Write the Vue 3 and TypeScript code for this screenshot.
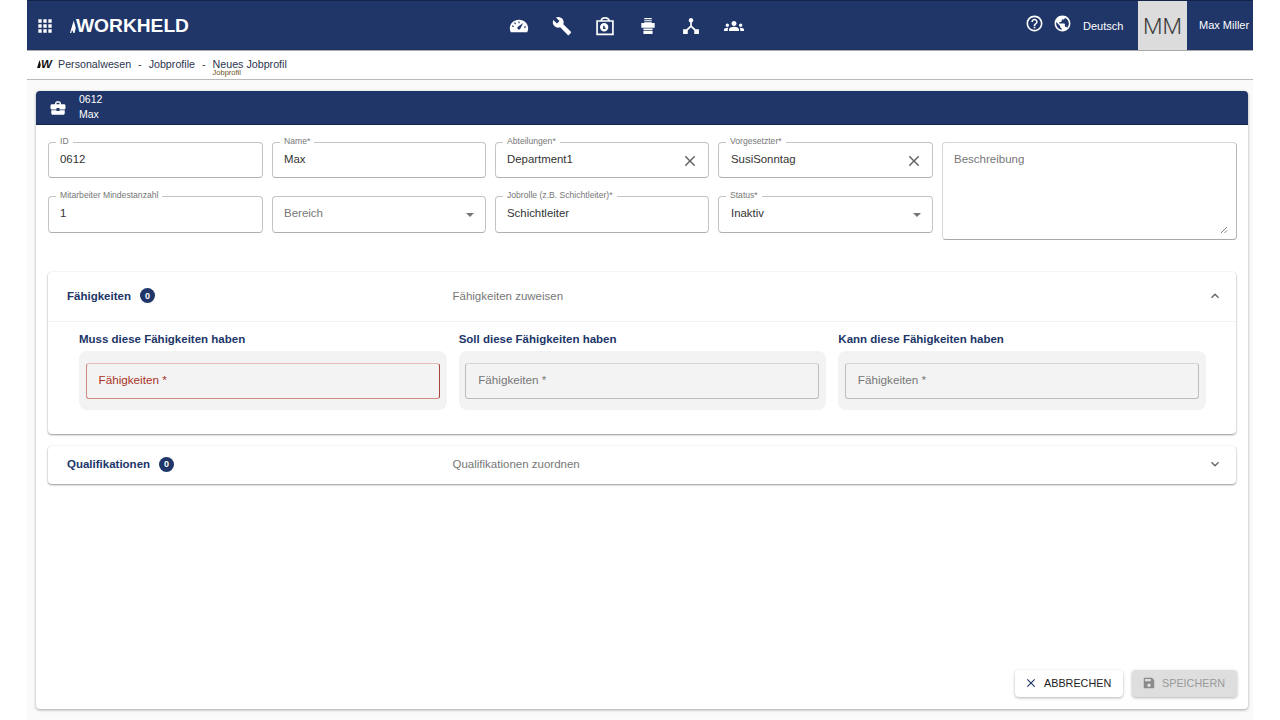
<script setup lang="ts">
interface Field {
  label: string
  value?: string
  placeholder?: string
  clear?: boolean
  arrow?: boolean
}
const fields: Field[] = [
  { label: 'ID', value: '0612' },
  { label: 'Name*', value: 'Max' },
  { label: 'Abteilungen*', value: 'Department1', clear: true },
  { label: 'Vorgesetzter*', value: 'SusiSonntag', clear: true },
  { label: 'Mitarbeiter Mindestanzahl', value: '1' },
  { label: '', placeholder: 'Bereich', arrow: true },
  { label: 'Jobrolle (z.B. Schichtleiter)*', value: 'Schichtleiter' },
  { label: 'Status*', value: 'Inaktiv', arrow: true },
]
const skills = [
  { title: 'Muss diese Fähigkeiten haben', error: true },
  { title: 'Soll diese Fähigkeiten haben', error: false },
  { title: 'Kann diese Fähigkeiten haben', error: false },
]
const closePath = 'M19 6.41L17.59 5 12 10.59 6.41 5 5 6.41 10.59 12 5 17.59 6.41 19 12 13.41 17.59 19 19 17.59 13.41 12z'
</script>

<template>
  <div class="app">
    <header class="topbar">
      <div class="top-left">
        <svg class="apps" viewBox="0 0 24 24"><path d="M4 8h4V4H4v4zm6 12h4v-4h-4v4zm-6 0h4v-4H4v4zm0-6h4v-4H4v4zm6 0h4v-4h-4v4zm6-10v4h4V4h-4zm-6 4h4V4h-4v4zm6 6h4v-4h-4v4zm0 6h4v-4h-4v4z" /></svg>
        <div class="logo">
          <svg class="logo-mark" viewBox="0 0 6 14"><path d="M0 14L3.700 1.500 5.800 9 4.500 14H3.300L2.700 11.800H1.800L1.300 14z" /></svg>
          <span>WORKHELD</span>
        </div>
      </div>
      <nav class="top-nav">
        <svg class="nav-ic" viewBox="0 0 24 24"><path fill-rule="evenodd" d="M12 4.500C5.600 4.500 1 9.300 1 14.800c0 1.800.5 3.500 1.200 4.700h19.600c.7-1.200 1.200-2.900 1.200-4.700C23 9.300 18.400 4.500 12 4.500zM17 8.500l-3.500 6.800a1.900 1.900 0 1 1-2.800-2.500zM11.300 6.500h1.400v2.200h-1.400zM6 8.400l1.100-.9 1.300 1.800-1.100.8zM3.500 12.500l.4-1.300 2.100.7-.4 1.300zM18 13l2.200-.7.4 1.300-2.200.7z" /></svg>
        <svg class="nav-ic" viewBox="0 0 24 24"><path d="M22.700 19l-9.100-9.100c.9-2.300.4-5-1.500-6.900-2-2-5-2.400-7.400-1.300L9 6 6 9 1.600 4.700C.4 7.100.9 10.100 2.900 12.100c1.900 1.900 4.600 2.400 6.900 1.500l9.100 9.100c.4.400 1 .4 1.400 0l2.300-2.300c.5-.4.500-1.100.1-1.400z" /></svg>
        <svg class="nav-ic" viewBox="0 0 24 24"><path fill-rule="evenodd" d="M1.500 5H6.500C7 2.500 9 1.300 12 1.300s5 1.200 6.100 3.700h4.400v18h-21zM3.500 7v14h17V7zM8.500 5h7.300c-.8-1.200-2.100-1.800-3.800-1.800S9.300 3.800 8.500 5zM11 8.500a5 5 0 1 1 0 10 5 5 0 0 1 0-10zm-1.300 3.200v3.800h3v-1.500h-1.200v-2.300z" /></svg>
        <svg class="nav-ic" viewBox="0 0 24 24"><path d="M7.500 2.500h9v1.300h-9zM7.500 5h9v1.300h-9zM7.500 7.500h9V8.500h3.500v5.500H4V8.500h3.500zM6.500 15h11v2h-11zM6.500 18h11v3.500h-11z" /></svg>
        <svg class="nav-ic" viewBox="0 0 24 24"><path d="M12 2.500a2.800 2.800 0 0 1 1 5.400v3.700l4.600 4.300h3.900v5.600h-5.600v-4.200L12 13.500l-3.900 3.800v4.200H2.500v-5.600h3.900L11 11.600V7.900a2.800 2.800 0 0 1 1-5.400z" /></svg>
        <svg class="nav-ic" viewBox="0 0 24 24"><path d="M12 12.750c1.630 0 3.070.39 4.240.9 1.080.48 1.760 1.560 1.760 2.730V18H6v-1.610c0-1.180.68-2.260 1.760-2.730 1.170-.52 2.610-.91 4.240-.91zM4 13c1.100 0 2-.9 2-2s-.9-2-2-2-2 .9-2 2 .9 2 2 2zm1.130 1.100c-.37-.06-.74-.1-1.130-.1-.99 0-1.930.21-2.780.58C.48 14.900 0 15.620 0 16.430V18h4.500v-1.610c0-.83.23-1.610.63-2.290zM20 13c1.100 0 2-.9 2-2s-.9-2-2-2-2 .9-2 2 .9 2 2 2zm4 3.430c0-.81-.48-1.530-1.220-1.850-.85-.37-1.790-.58-2.780-.58-.39 0-.76.04-1.130.1.4.68.63 1.460.63 2.290V18H24v-1.570zM12 6c1.660 0 3 1.340 3 3s-1.340 3-3 3-3-1.340-3-3 1.340-3 3-3z" /></svg>
      </nav>
      <div class="top-right">
        <svg class="right-ic" viewBox="0 0 24 24"><path d="M11 18h2v-2h-2v2zm1-16C6.480 2 2 6.480 2 12s4.480 10 10 10 10-4.480 10-10S17.520 2 12 2zm0 18c-4.410 0-8-3.590-8-8s3.590-8 8-8 8 3.590 8 8-3.590 8-8 8zm0-14c-2.210 0-4 1.790-4 4h2c0-1.100.9-2 2-2s2 .9 2 2c0 2-3 1.750-3 5h2c0-2.250 3-2.500 3-5 0-2.210-1.790-4-4-4z" /></svg>
        <svg class="right-ic globe" viewBox="0 0 24 24"><path d="M12 2C6.480 2 2 6.480 2 12s4.480 10 10 10 10-4.480 10-10S17.520 2 12 2zm-1 17.930c-3.950-.49-7-3.850-7-7.930 0-.62.08-1.210.21-1.790L9 15v1c0 1.100.9 2 2 2v1.930zm6.900-2.540c-.26-.81-1-1.390-1.900-1.390h-1v-3c0-.55-.45-1-1-1H8v-2h2c.55 0 1-.45 1-1V7h2c1.100 0 2-.9 2-2v-.41c2.930 1.190 5 4.060 5 7.410 0 2.080-.8 3.970-2.100 5.390z" /></svg>
        <span class="lang">Deutsch</span>
        <div class="avatar">MM</div>
        <span class="user">Max Miller</span>
      </div>
    </header>

    <div class="crumbs">
      <span class="crumb-logo"><svg class="crumb-mark" viewBox="0 0 6 14"><path d="M0 14L3.700 1.500 5.800 9 4.500 14H1.300z" /></svg>W</span>
      <span class="crumb">Personalwesen</span>
      <span class="sep">-</span>
      <span class="crumb">Jobprofile</span>
      <span class="sep">-</span>
      <span class="crumb last">Neues Jobprofil<small class="crumb-sub">Jobprofil</small></span>
    </div>

    <main class="card">
      <div class="card-head">
        <svg class="brief" viewBox="0 0 24 24"><path d="M10 16v-1H3.010L3 19c0 1.110.89 2 2 2h14c1.110 0 2-.89 2-2v-4h-7v1h-4zm10-9h-4.010V5l-2-2h-4l-2 2v2H4c-1.100 0-2 .9-2 2v3c0 1.110.89 2 2 2h6v-2h4v2h6c1.100 0 2-.9 2-2V9c0-1.100-.9-2-2-2zm-6 0h-4V5h4v2z" /></svg>
        <div class="head-text"><div>0612</div><div>Max</div></div>
      </div>

      <div class="card-body">
        <section class="form">
          <div class="grid">
            <div v-for="f in fields" :key="f.label + f.placeholder" class="field">
              <span v-if="f.label" class="flabel">{{ f.label }}</span>
              <span v-if="f.value" class="fvalue">{{ f.value }}</span>
              <span v-else class="fplace">{{ f.placeholder }}</span>
              <svg v-if="f.clear" class="clear" viewBox="0 0 24 24"><path :d="closePath" /></svg>
              <span v-if="f.arrow" class="caret"></span>
            </div>
          </div>
          <div class="area">
            <span class="fplace">Beschreibung</span>
            <svg class="grip" viewBox="0 0 8 8"><path d="M7 1L1 7M7 4.500L4.500 7" /></svg>
          </div>
        </section>

        <section class="panel">
          <div class="panel-head open">
            <div class="panel-title"><b>Fähigkeiten</b><span class="badge">0</span></div>
            <div class="panel-desc">Fähigkeiten zuweisen</div>
            <svg class="chev" viewBox="0 0 24 24"><path d="M12 8l-6 6 1.410 1.410L12 10.830l4.590 4.580L18 14z" /></svg>
          </div>
          <div class="panel-body">
            <div v-for="s in skills" :key="s.title" class="skill">
              <h4>{{ s.title }}</h4>
              <div class="skill-box">
                <div class="skill-input" :class="{ error: s.error }">Fähigkeiten *</div>
              </div>
            </div>
          </div>
        </section>

        <section class="panel">
          <div class="panel-head closed">
            <div class="panel-title"><b>Qualifikationen</b><span class="badge">0</span></div>
            <div class="panel-desc">Qualifikationen zuordnen</div>
            <svg class="chev" viewBox="0 0 24 24"><path d="M16.590 8.590L12 13.170 7.410 8.590 6 10l6 6 6-6z" /></svg>
          </div>
        </section>

        <div class="actions">
          <button class="btn cancel" type="button">
            <svg viewBox="0 0 24 24"><path :d="closePath" /></svg>ABBRECHEN
          </button>
          <button class="btn save" type="button" disabled>
            <svg viewBox="0 0 24 24"><path d="M17 3H5c-1.110 0-2 .9-2 2v14c0 1.100.89 2 2 2h14c1.100 0 2-.9 2-2V7l-4-4zm-5 16c-1.660 0-3-1.340-3-3s1.340-3 3-3 3 1.340 3 3-1.340 3-3 3zm3-10H5V5h10v4z" /></svg>SPEICHERN
          </button>
        </div>
      </div>
    </main>
  </div>
</template>

<style>
html, body { margin: 0; background: #fff; }
</style>

<style scoped>
.app {
  width: 1226px;
  height: 720px;
  margin-left: 27px;
  background: #fafafa;
  display: flex;
  flex-direction: column;
  font-family: "Liberation Sans", Arial, sans-serif;
  color: #333;
  overflow: hidden;
}
.topbar {
  height: 51px;
  flex: none;
  box-sizing: border-box;
  background: #203668;
  border-top: 1px solid #14244c;
  border-bottom: 1px solid #a9a9a9;
  display: grid;
  grid-template-columns: 482px auto 1fr;
  align-items: center;
  color: #fff;
}
.top-left { display: flex; align-items: center; padding-left: 8px; }
.apps { width: 20px; height: 20px; fill: #fff; }
.logo { display: flex; align-items: center; margin-left: 15px; font-weight: 700; font-size: 19.200px; }
.logo-mark { width: 6px; height: 14px; fill: #fff; margin-top: 1px; }
.top-nav { display: flex; gap: 23px; align-items: center; }
.nav-ic { width: 20px; height: 20px; fill: #fff; }
.top-right { display: flex; align-items: center; justify-content: flex-end; height: 100%; }
.right-ic { width: 19px; height: 19px; fill: #fff; margin-right: 9px; margin-top: -4px; }
.globe { margin-right: 11px; }
.lang { font-size: 11px; width: 55px; }
.avatar {
  width: 49px;
  height: 100%;
  background: #dcdcdc;
  color: #3a3a3a;
  font-family: Roboto, "Liberation Sans", sans-serif;
  font-weight: 300;
  font-size: 22.500px;
  display: flex;
  align-items: center;
  justify-content: center;
}
.user { font-size: 11px; width: 54px; padding-left: 12px; white-space: nowrap; margin-top: -2px; }
.crumbs {
  height: 29px;
  flex: none;
  box-sizing: border-box;
  background: #fff;
  border-bottom: 1px solid #b9b9b9;
  display: flex;
  align-items: center;
  padding: 0 0 3px 10px;
  font-size: 10.700px;
  color: #2c3650;
}
.crumb-logo { display: flex; align-items: center; font-weight: 700; font-style: italic; font-size: 11.500px; color: #111; width: 21px; }
.crumb-mark { width: 4px; height: 9px; fill: #111; }
.sep { margin: 0 7px; }
.last { position: relative; }
.crumb-sub { position: absolute; left: 0; top: 10px; font-size: 7.500px; color: #6b5320; white-space: nowrap; }
.card {
  margin: 11px 5px 11px 9px;
  flex: 1;
  min-height: 0;
  background: #fff;
  border-radius: 4px;
  box-shadow: 0 1px 3px rgba(0, 0, 0, 0.35);
  display: flex;
  flex-direction: column;
}
.card-head {
  height: 34px;
  flex: none;
  box-sizing: border-box;
  background: #203668;
  border-radius: 4px 4px 0 0;
  border-bottom: 1px solid #14244c;
  display: flex;
  align-items: center;
  color: #fff;
  font-size: 10.500px;
  padding-left: 13px;
}
.brief { width: 18px; height: 18px; fill: #fff; margin-right: 12px; }
.head-text { line-height: 15px; margin-top: -1px; }
.card-body { flex: 1; min-height: 0; display: flex; flex-direction: column; padding: 17px 12px 12px; }
.form { display: flex; gap: 9px; height: 130px; flex: none; }
.grid {
  flex: none;
  display: grid;
  grid-template-columns: 215px 214px 214px 215px;
  grid-template-rows: 36px 37px;
  row-gap: 18px;
  column-gap: 9px;
}
.field {
  position: relative;
  box-sizing: border-box;
  border: 1px solid #c4c4c4;
  border-bottom-color: #b0b0b0;
  border-radius: 4px;
  display: flex;
  align-items: center;
  padding: 0 11px 2px;
  font-size: 11.400px;
  color: #333;
}
.field:nth-child(n + 5) { padding-bottom: 3px; }
.field:nth-child(4n) { padding-left: 12px; }
.flabel {
  position: absolute;
  left: 7px;
  top: -7px;
  background: #fff;
  padding: 0 4px;
  font-size: 8.600px;
  line-height: 10px;
  color: #777;
  white-space: nowrap;
}
.fplace { color: #777; font-size: 11.500px; }
.clear { position: absolute; right: 9px; top: 9px; width: 18px; height: 18px; fill: #666; }
.caret {
  position: absolute;
  right: 11px;
  top: 16px;
  width: 0;
  height: 0;
  border-left: 4px solid transparent;
  border-right: 4px solid transparent;
  border-top: 4px solid #757575;
}
.area {
  position: relative;
  flex: none;
  width: 295px;
  height: 98px;
  box-sizing: border-box;
  border: 1px solid #d8d8d8;
  border-right-color: #b5b5b5;
  border-bottom-color: #a8a8a8;
  border-radius: 4px;
  padding: 8px 11px;
  line-height: 14px;
}
.grip { position: absolute; right: 8px; bottom: 5px; width: 8px; height: 8px; fill: none; stroke: #777; stroke-width: 0.9; }
.panel {
  background: #fff;
  border-radius: 4px;
  box-shadow: 0 1px 2px rgba(0, 0, 0, 0.4), 0 0 2px rgba(0, 0, 0, 0.08);
  margin-bottom: 12px;
  flex: none;
}
.panel-head { display: flex; align-items: center; box-sizing: border-box; padding: 0 13px 2px 19px; font-size: 11.500px; }
.panel-head.open { height: 50px; border-bottom: 1px solid #f2f2f2; }
.panel-head.closed { height: 38px; }
.panel-title { width: 385.500px; display: flex; align-items: center; gap: 9px; color: #203668; }
.badge {
  width: 15px;
  height: 15px;
  border-radius: 50%;
  background: #203668;
  color: #fff;
  font-size: 9px;
  font-weight: 700;
  display: flex;
  align-items: center;
  justify-content: center;
}
.panel-desc { flex: 1; color: #777; font-size: 11.500px; }
.chev { width: 16px; height: 16px; fill: #666; }
.panel-body { display: flex; gap: 12px; padding: 10px 30px 24px 31px; height: 78px; }
.skill { flex: 1; display: flex; flex-direction: column; min-width: 0; }
.skill h4 { margin: 0 0 5px; font-size: 11.500px; line-height: 14px; font-weight: 700; color: #203668; }
.skill-box { background: #f3f3f3; border-radius: 8px; padding: 12px 7px 11px 6.500px; flex: 1; }
.skill-input {
  box-sizing: border-box;
  height: 36px;
  border: 1px solid #bdbdbd;
  border-top-color: #d4d4d4;
  border-radius: 3px;
  padding: 0 12px 4px;
  display: flex;
  align-items: center;
  font-size: 11.700px;
  color: #777;
}
.skill-input.error { border-color: #d08a84; border-top-color: #e4bdb9; border-right-color: #a8423a; color: #a93226; }
.actions { margin-top: auto; margin-right: -1px; display: flex; justify-content: flex-end; gap: 9px; }
.btn {
  height: 27px;
  border: 0;
  border-radius: 4px;
  display: flex;
  align-items: center;
  font-family: inherit;
  font-size: 10.800px;
  padding: 0 0 1px;
  box-shadow: 0 1px 3px rgba(0, 0, 0, 0.3);
}
.btn svg { width: 14px; height: 14px; margin-right: 6px; }
.cancel { width: 108px; background: #fff; color: #222; padding-left: 9px; }
.cancel svg { fill: #203668; }
.save { width: 105px; background: #dedede; color: #9a9a9a; padding-left: 10px; }
.save svg { fill: #8a8a8a; margin-right: 6px; }
</style>
